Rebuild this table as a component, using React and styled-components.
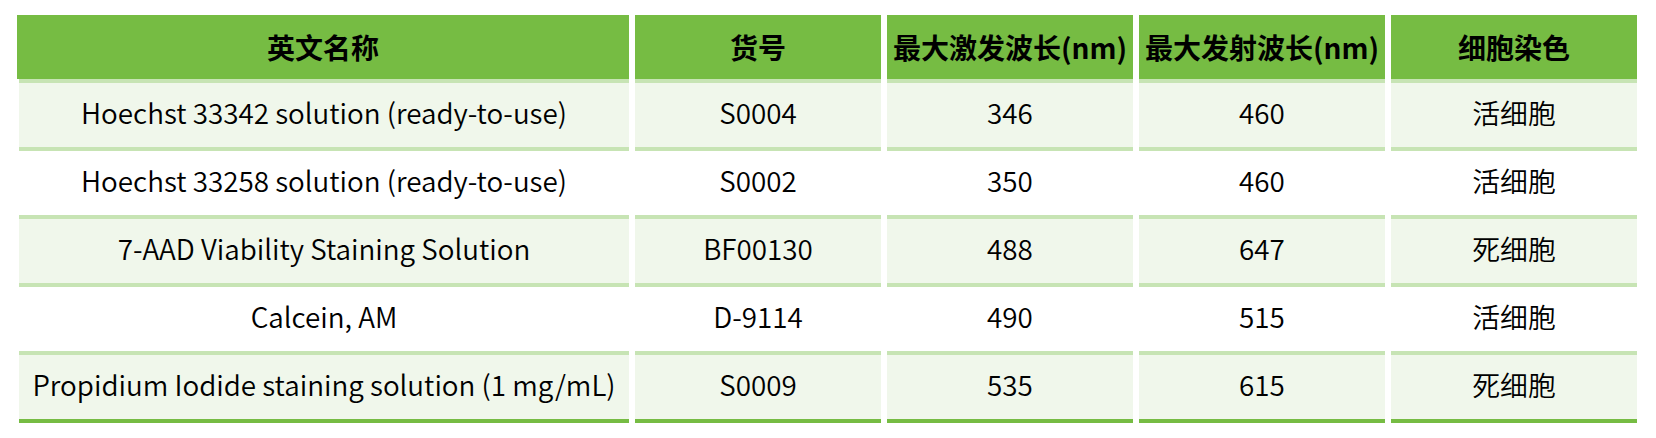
import React from 'react'
import styled, { createGlobalStyle } from 'styled-components'

const Global = createGlobalStyle`
  html, body {
    margin: 0;
    padding: 0;
    background: #ffffff;
  }
  body {
    font-family: "Noto Sans CJK SC", "Noto Sans", sans-serif;
    color: #000;
  }
`

const Table = styled.div`
  display: grid;
  grid-template-columns: 612px repeat(4, 246px);
  column-gap: 6px;
  margin: 15px 0 0 17px;
  width: max-content;
`

const Head = styled.div`
  height: 64px;
  background: #76bc43;
  display: flex;
  align-items: center;
  justify-content: center;
  font-size: 28px;
  font-weight: 700;
  white-space: nowrap;
`

// 58px content + 6px bottom padding = 64px row, text sits a little high like the source
const Cell = styled.div`
  height: 58px;
  padding-bottom: 6px;
  box-sizing: content-box;
  margin-left: ${p => (p.$first ? '2px' : '0')};
  background: ${p => (p.$shade ? '#f0f7eb' : '#ffffff')};
  border-top: 4px solid #c7e4b4;
  border-bottom: ${p => (p.$last ? '4px solid #76bc43' : 'none')};
  display: flex;
  align-items: center;
  justify-content: center;
  font-size: 27.8px;
  font-weight: 350;
  white-space: nowrap;
`

const headers = ['英文名称', '货号', '最大激发波长(nm)', '最大发射波长(nm)', '细胞染色']

const rows = [
  ['Hoechst 33342 solution (ready-to-use)', 'S0004', '346', '460', '活细胞'],
  ['Hoechst 33258 solution (ready-to-use)', 'S0002', '350', '460', '活细胞'],
  ['7-AAD Viability Staining Solution', 'BF00130', '488', '647', '死细胞'],
  ['Calcein, AM', 'D-9114', '490', '515', '活细胞'],
  ['Propidium Iodide staining solution (1 mg/mL)', 'S0009', '535', '615', '死细胞'],
]

export default function App() {
  return (
    <>
      <Global />
      <Table>
        {headers.map(h => (
          <Head key={h}>{h}</Head>
        ))}
        {rows.map((row, i) =>
          row.map((v, j) => (
            <Cell
              key={i + '-' + j}
              $first={j === 0}
              $shade={i % 2 === 0}
              $last={i === rows.length - 1}
            >
              {v}
            </Cell>
          ))
        )}
      </Table>
    </>
  )
}
